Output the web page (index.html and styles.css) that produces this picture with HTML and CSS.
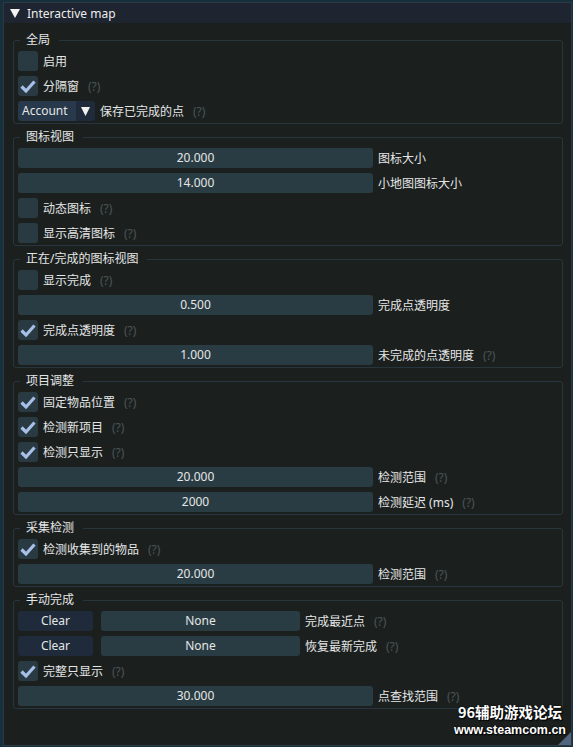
FILE: index.html
```html
<!DOCTYPE html>
<html lang="zh">
<head>
    <meta charset="UTF-8">
    <meta name="viewport" content="width=device-width, initial-scale=1.0">
    <title>Interactive map</title>
    <link rel="stylesheet" href="styles.css">
</head>
<body>
    <div class="window">
        <div class="titlebar">
            <svg class="collapse" width="10" height="9" viewBox="0 0 10 9"><polygon points="0,0 10,0 5,9" fill="#f2f2f2"/></svg>
            <span>Interactive map</span>
        </div>

        <div class="content">
            <fieldset class="group">
                <legend>全局</legend>
                <div class="rows">
                    <div class="row"><span class="check"></span><span>启用</span></div>
                    <div class="row">
                        <span class="check"><svg width="20" height="20" viewBox="0 0 20 20"><polyline points="3.5,10.5 8,15 16.5,5.5" /></svg></span>
                        <span>分隔窗</span><span class="help">(?)</span>
                    </div>
                    <div class="row">
                        <div class="combo">
                            <span class="combo-value">Account</span>
                            <span class="combo-arrow"><svg width="9" height="9" viewBox="0 0 9 9"><polygon points="0,0 9,0 4.5,9" fill="#f2f2f2"/></svg></span>
                        </div>
                        <span>保存已完成的点</span><span class="help">(?)</span>
                    </div>
                </div>
            </fieldset>

            <fieldset class="group">
                <legend>图标视图</legend>
                <div class="rows">
                    <div class="row"><span class="slider">20.000</span><span>图标大小</span></div>
                    <div class="row"><span class="slider">14.000</span><span>小地图图标大小</span></div>
                    <div class="row"><span class="check"></span><span>动态图标</span><span class="help">(?)</span></div>
                    <div class="row"><span class="check"></span><span>显示高清图标</span><span class="help">(?)</span></div>
                </div>
            </fieldset>

            <fieldset class="group">
                <legend>正在/完成的图标视图</legend>
                <div class="rows">
                    <div class="row"><span class="check"></span><span>显示完成</span><span class="help">(?)</span></div>
                    <div class="row"><span class="slider">0.500</span><span>完成点透明度</span></div>
                    <div class="row">
                        <span class="check"><svg width="20" height="20" viewBox="0 0 20 20"><polyline points="3.5,10.5 8,15 16.5,5.5" /></svg></span>
                        <span>完成点透明度</span><span class="help">(?)</span>
                    </div>
                    <div class="row"><span class="slider">1.000</span><span>未完成的点透明度</span><span class="help">(?)</span></div>
                </div>
            </fieldset>

            <fieldset class="group">
                <legend>项目调整</legend>
                <div class="rows">
                    <div class="row">
                        <span class="check"><svg width="20" height="20" viewBox="0 0 20 20"><polyline points="3.5,10.5 8,15 16.5,5.5" /></svg></span>
                        <span>固定物品位置</span><span class="help">(?)</span>
                    </div>
                    <div class="row">
                        <span class="check"><svg width="20" height="20" viewBox="0 0 20 20"><polyline points="3.5,10.5 8,15 16.5,5.5" /></svg></span>
                        <span>检测新项目</span><span class="help">(?)</span>
                    </div>
                    <div class="row">
                        <span class="check"><svg width="20" height="20" viewBox="0 0 20 20"><polyline points="3.5,10.5 8,15 16.5,5.5" /></svg></span>
                        <span>检测只显示</span><span class="help">(?)</span>
                    </div>
                    <div class="row"><span class="slider">20.000</span><span>检测范围</span><span class="help">(?)</span></div>
                    <div class="row"><span class="slider">2000</span><span>检测延迟 (ms)</span><span class="help">(?)</span></div>
                </div>
            </fieldset>

            <fieldset class="group">
                <legend>采集检测</legend>
                <div class="rows">
                    <div class="row">
                        <span class="check"><svg width="20" height="20" viewBox="0 0 20 20"><polyline points="3.5,10.5 8,15 16.5,5.5" /></svg></span>
                        <span>检测收集到的物品</span><span class="help">(?)</span>
                    </div>
                    <div class="row"><span class="slider">20.000</span><span>检测范围</span><span class="help">(?)</span></div>
                </div>
            </fieldset>

            <fieldset class="group">
                <legend>手动完成</legend>
                <div class="rows">
                    <div class="row"><span class="btn">Clear</span><span class="field">None</span><span>完成最近点</span><span class="help">(?)</span></div>
                    <div class="row"><span class="btn">Clear</span><span class="field">None</span><span>恢复最新完成</span><span class="help">(?)</span></div>
                    <div class="row">
                        <span class="check"><svg width="20" height="20" viewBox="0 0 20 20"><polyline points="3.5,10.5 8,15 16.5,5.5" /></svg></span>
                        <span>完整只显示</span><span class="help">(?)</span>
                    </div>
                    <div class="row"><span class="slider">30.000</span><span>点查找范围</span><span class="help">(?)</span></div>
                </div>
            </fieldset>
        </div>

        <div class="watermark">
            <div class="wm-title">96辅助游戏论坛</div>
            <div class="wm-url">www.steamcom.cn</div>
        </div>
        <div class="grip"></div>
    </div>
</body>
</html>
```

FILE: styles.css
```css
* {
    box-sizing: border-box;
}

body {
    margin: 0;
    padding: 2px 1px 0 3px;
    height: 747px;
    overflow: hidden;
    background-color: #16303c;
    font-family: "Noto Sans", "Noto Sans CJK SC", sans-serif;
    font-size: 12px;
    color: #e4e6e6;
}

/* Window frame */
.window {
    position: relative;
    height: 744px;
    border: 1px solid #2b3a45;
    background-color: #1b201f;
}

.titlebar {
    height: 20px;
    display: flex;
    align-items: center;
    gap: 7px;
    padding-left: 6px;
    background-color: #1e2430;
    font-size: 12px;
    color: #ececec;
}

.content {
    padding: 9px 8px 0 9px;
}

/* Groups */
.group {
    margin: 0 0 5px;
    padding: 3px 4px 2px;
    min-width: 0;
    border: 1px solid #27363e;
    border-radius: 3px;
}

.group legend {
    margin-left: 2px;
    padding: 0 9px 0 6px;
    line-height: 16px;
}

.rows {
    display: flex;
    flex-direction: column;
    gap: 5px;
}

.row {
    height: 20px;
    display: flex;
    align-items: center;
    gap: 5px;
    white-space: nowrap;
}

.help {
    margin-left: 4px;
    color: #4a5555;
}

/* Widgets */
.check {
    width: 20px;
    height: 20px;
    border-radius: 3px;
    background-color: #293a42;
}

.check svg {
    display: block;
}

.check polyline {
    fill: none;
    stroke: #a8bfe8;
    stroke-width: 3.2;
}

.slider, .field {
    height: 20px;
    line-height: 20px;
    text-align: center;
    border-radius: 3px;
    background-color: #2a3c43;
}

.slider {
    width: 355px;
}

.field {
    width: 199px;
}

.btn {
    width: 75px;
    height: 20px;
    line-height: 20px;
    margin-right: 3px;
    text-align: center;
    border-radius: 3px;
    background-color: #1f2a3a;
}

.combo {
    width: 77px;
    height: 20px;
    display: flex;
    border-radius: 3px;
    overflow: hidden;
}

.combo-value {
    flex: 1;
    padding-left: 4px;
    line-height: 20px;
    background-color: #27394a;
}

.combo-arrow {
    width: 19px;
    display: flex;
    align-items: center;
    justify-content: center;
    background-color: #1f2a3a;
}

/* Overlays */
.watermark {
    position: absolute;
    right: 5px;
    top: 700px;
    text-align: center;
    font-family: "Liberation Sans", "Noto Sans CJK SC", sans-serif;
    font-weight: bold;
    color: #ffffff;
    text-shadow: 0 0 2px #000, 1px 1px 1px #000;
}

.wm-title {
    font-family: "Noto Sans CJK SC", sans-serif;
    font-size: 14.5px;
    line-height: 17px;
}

.wm-url {
    margin-top: 2px;
    font-size: 12.5px;
    line-height: 16px;
}

.grip {
    position: absolute;
    right: 0;
    bottom: 0;
    width: 13px;
    height: 13px;
    background-color: #52657f;
    clip-path: polygon(100% 0, 100% 100%, 0 100%);
}
```
